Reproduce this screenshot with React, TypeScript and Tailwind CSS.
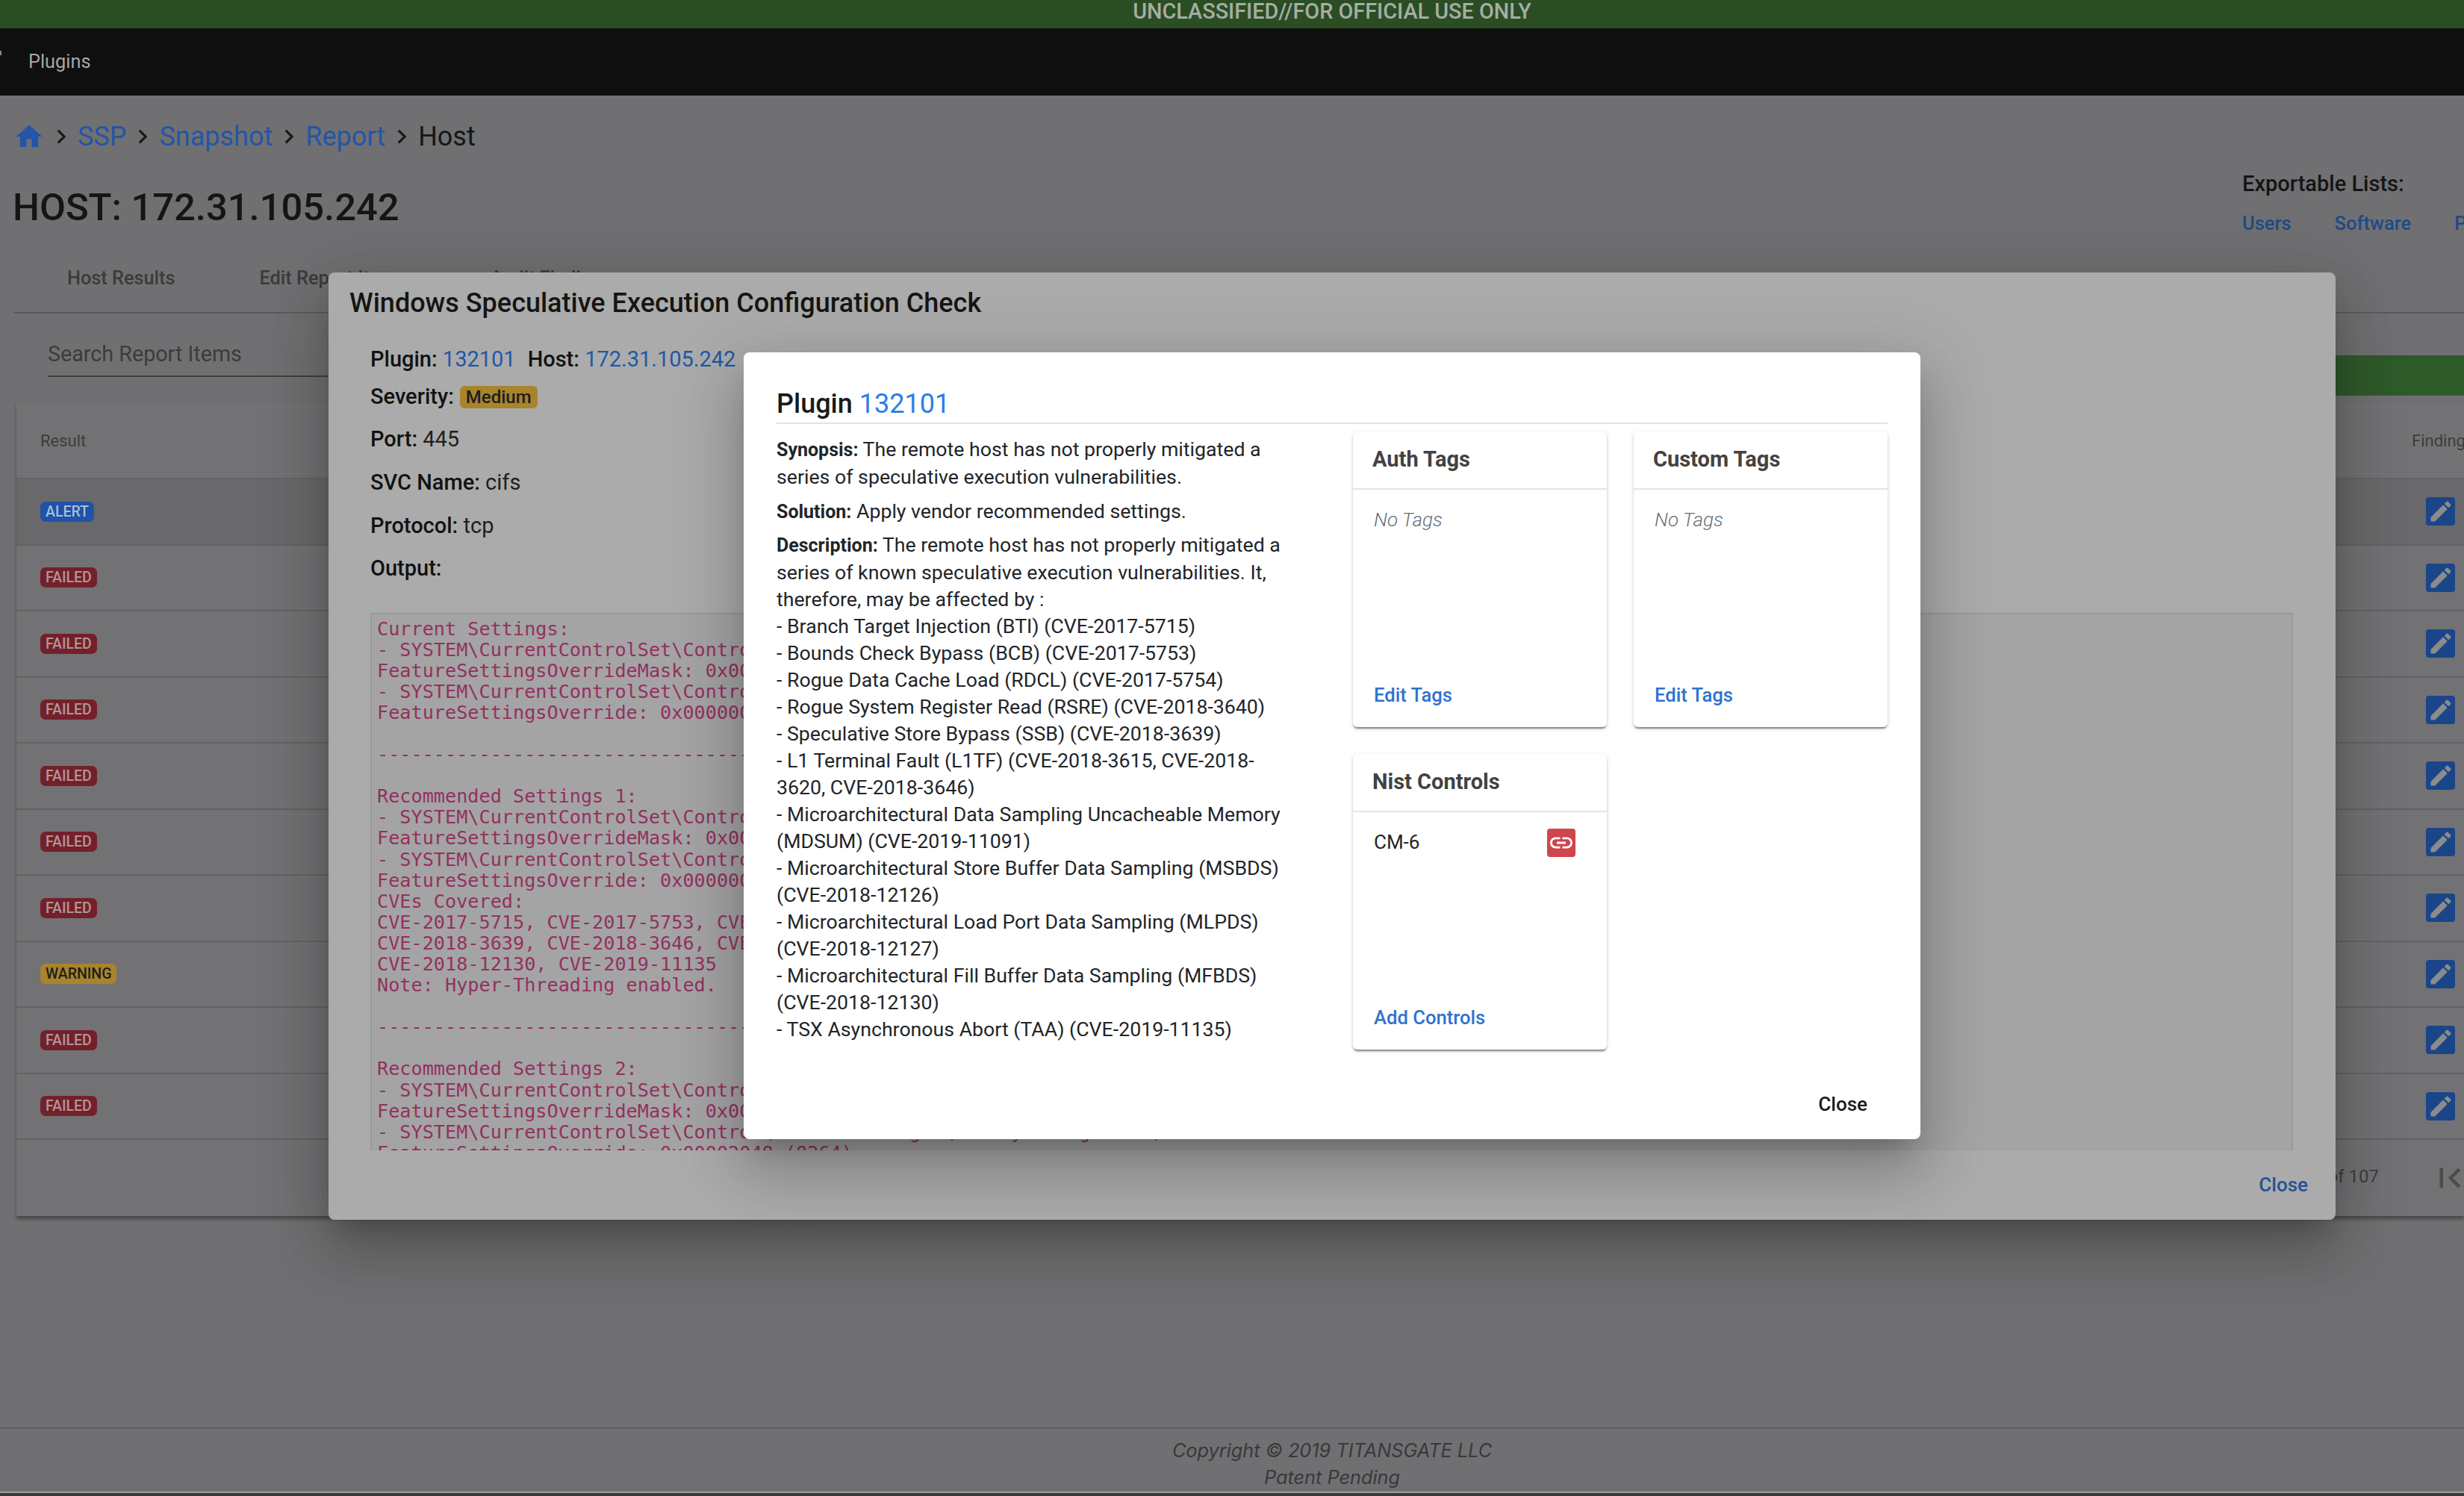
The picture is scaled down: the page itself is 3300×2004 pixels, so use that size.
const preLines = [
  "Current Settings:",
  "- SYSTEM\\CurrentControlSet\\Control\\Session Manager\\Memory Management\\",
  "FeatureSettingsOverrideMask: 0x00000003 (3)",
  "- SYSTEM\\CurrentControlSet\\Control\\Session Manager\\Memory Management\\",
  "FeatureSettingsOverride: 0x00000000 (0)",
  "",
  "------------------------------------------------------------",
  "",
  "Recommended Settings 1:",
  "- SYSTEM\\CurrentControlSet\\Control\\Session Manager\\Memory Management\\",
  "FeatureSettingsOverrideMask: 0x00000003 (3)",
  "- SYSTEM\\CurrentControlSet\\Control\\Session Manager\\Memory Management\\",
  "FeatureSettingsOverride: 0x00000000 (0)",
  "CVEs Covered:",
  "CVE-2017-5715, CVE-2017-5753, CVE-2017-5754, CVE-2018-3640,",
  "CVE-2018-3639, CVE-2018-3646, CVE-2018-12126, CVE-2018-12127,",
  "CVE-2018-12130, CVE-2019-11135",
  "Note: Hyper-Threading enabled.",
  "",
  "------------------------------------------------------------",
  "",
  "Recommended Settings 2:",
  "- SYSTEM\\CurrentControlSet\\Control\\Session Manager\\Memory Management\\",
  "FeatureSettingsOverrideMask: 0x00000003 (3)",
  "- SYSTEM\\CurrentControlSet\\Control\\Session Manager\\Memory Management\\",
  "FeatureSettingsOverride: 0x00002048 (8264)",
];

const descriptionLines = [
  "series of known speculative execution vulnerabilities. It,",
  "therefore, may be affected by :",
  "- Branch Target Injection (BTI) (CVE-2017-5715)",
  "- Bounds Check Bypass (BCB) (CVE-2017-5753)",
  "- Rogue Data Cache Load (RDCL) (CVE-2017-5754)",
  "- Rogue System Register Read (RSRE) (CVE-2018-3640)",
  "- Speculative Store Bypass (SSB) (CVE-2018-3639)",
  "- L1 Terminal Fault (L1TF) (CVE-2018-3615, CVE-2018-",
  "3620, CVE-2018-3646)",
  "- Microarchitectural Data Sampling Uncacheable Memory",
  "(MDSUM) (CVE-2019-11091)",
  "- Microarchitectural Store Buffer Data Sampling (MSBDS)",
  "(CVE-2018-12126)",
  "- Microarchitectural Load Port Data Sampling (MLPDS)",
  "(CVE-2018-12127)",
  "- Microarchitectural Fill Buffer Data Sampling (MFBDS)",
  "(CVE-2018-12130)",
  "- TSX Asynchronous Abort (TAA) (CVE-2019-11135)",
];

const rows = [
  "ALERT",
  "FAILED",
  "FAILED",
  "FAILED",
  "FAILED",
  "FAILED",
  "FAILED",
  "WARNING",
  "FAILED",
  "FAILED",
];

function MdIcon({ d, className }: { d: string; className: string }) {
  return (
    <svg viewBox="0 0 24 24" fill="currentColor" className={className}>
      <path d={d} />
    </svg>
  );
}

function Chevron() {
  return (
    <MdIcon
      d="M10 6L8.59 7.41 13.17 12l-4.58 4.59L10 18l6-6z"
      className="mx-[3px] h-[38px] w-[38px] shrink-0 text-[#1a1a1a]"
    />
  );
}

function StatusBadge({ label }: { label: string }) {
  const color =
    label === "ALERT"
      ? "bg-[#2052a6] text-[#a9bcdc]"
      : label === "WARNING"
        ? "bg-[#a8842c] text-[#1d1d1d]"
        : "bg-[#74202a] text-[#b09698]";
  return (
    <span
      className={`inline-flex h-[27px] items-center rounded-[7px] px-[7px] text-[19.5px] font-medium ${color}`}
    >
      {label}
    </span>
  );
}

function Card({
  title,
  action,
  children,
}: {
  title: string;
  action: string;
  children: React.ReactNode;
}) {
  return (
    <div className="flex h-[396px] flex-col rounded-[6px] bg-white shadow-[0_4px_2px_-2px_rgba(0,0,0,0.3),0_2px_2px_0_rgba(0,0,0,0.18),0_2px_6px_0_rgba(0,0,0,0.14)]">
      <div className="flex h-[78px] shrink-0 items-center border-b-2 border-[#e3e3e3] pl-[26px] text-[29px] font-bold text-[#424242]">
        {title}
      </div>
      <div className="flex-1 pl-[28px] pr-[42px] pt-[22px] text-[26px] leading-[36px]">
        {children}
      </div>
      <div className="pb-[25px] pl-[28px] text-[25.6px] font-medium leading-[36px] text-[#2f72d0]">
        {action}
      </div>
    </div>
  );
}

function PluginModal() {
  return (
    <div className="absolute inset-0 flex items-center justify-center pb-[6px] pl-[268px]">
      <div className="flex h-[1054px] w-[1576px] flex-col rounded-[8px] bg-white pl-[44px] pr-[44px] shadow-[0_22px_30px_-14px_rgba(0,0,0,0.2),0_48px_76px_6px_rgba(0,0,0,0.14),0_18px_92px_16px_rgba(0,0,0,0.12)]">
        <div className="flex h-[96px] shrink-0 items-end border-b-2 border-[#e2e2e2] pb-[3px] text-[36px] font-medium leading-[44px] text-[#1a1a1a]">
          Plugin&nbsp;<span className="font-normal text-[#2b7de9]">132101</span>
        </div>
        <div className="flex justify-between">
          <div className="w-[720px] whitespace-nowrap pt-[16px] text-[26.7px] leading-[36px] text-[#212529]">
            <p className="mb-[10px]">
              <strong className="text-[25px] font-bold">Synopsis:</strong> The remote host has not
              properly mitigated a
              <br />
              series of speculative execution vulnerabilities.
            </p>
            <p className="mb-[8px]">
              <strong className="text-[25px] font-bold">Solution:</strong> Apply vendor recommended
              settings.
            </p>
            <p>
              <strong className="text-[25px] font-bold">Description:</strong> The remote host has
              not properly mitigated a
            </p>
            {descriptionLines.map((line, i) => (
              <div key={i}>{line}</div>
            ))}
          </div>
          <div className="grid grid-cols-[340px_340px] gap-[36px] pt-[10px]">
            <Card title="Auth Tags" action="Edit Tags">
              <i className="font-light text-[#666f76]">No Tags</i>
            </Card>
            <Card title="Custom Tags" action="Edit Tags">
              <i className="font-light text-[#666f76]">No Tags</i>
            </Card>
            <Card title="Nist Controls" action="Add Controls">
              <div className="flex items-start justify-between text-[#212529]">
                <span>CM-6</span>
                <button className="flex h-[38px] w-[38px] items-center justify-center rounded-[4px] bg-[#cf454c] text-white">
                  <MdIcon
                    d="M3.9 12c0-1.71 1.39-3.1 3.1-3.1h4V7H7c-2.76 0-5 2.24-5 5s2.24 5 5 5h4v-1.9H7c-1.71 0-3.1-1.39-3.1-3.1zM8 13h8v-2H8v2zm9-6h-4v1.9h4c1.71 0 3.1 1.39 3.1 3.1s-1.39 3.1-3.1 3.1h-4V17h4c2.76 0 5-2.24 5-5s-2.24-5-5-5z"
                    className="h-[36px] w-[36px]"
                  />
                </button>
              </div>
            </Card>
          </div>
        </div>
        <div className="mt-auto flex justify-end pb-[29px] pr-[27px] text-[26px] font-medium leading-[36px] text-[#1a1a1a]">
          Close
        </div>
      </div>
    </div>
  );
}

function FindingModal() {
  return (
    <div className="absolute inset-0 flex items-center justify-center pb-[6px] pl-[268px]">
      <div className="flex h-[1269px] w-[2688px] flex-col rounded-[8px] bg-[#ababab] shadow-[0_22px_30px_-14px_rgba(0,0,0,0.2),0_48px_76px_6px_rgba(0,0,0,0.14),0_18px_92px_16px_rgba(0,0,0,0.12)]">
        <div className="h-[82px] shrink-0 pl-[28px] pt-[19px] text-[36px] font-medium leading-[44px] text-[#151515]">
          Windows Speculative Execution Configuration Check
        </div>
        <div className="pl-[56px] text-[29px] leading-[40px] text-[#1f1f1f]">
          <div className="mt-[14px] h-[50px]">
            <b className="font-medium text-[#121212]">Plugin:</b>{" "}
            <span className="text-[#1f58a8]">132101</span>
            <b className="ml-[16px] font-medium text-[#121212]">Host:</b>{" "}
            <span className="text-[#1f58a8]">172.31.105.242</span>
          </div>
          <div className="flex h-[57px] items-start">
            <b className="font-medium text-[#121212]">Severity:</b>
            <span className="ml-[8px] mt-[6px] flex h-[30px] items-center rounded-[6px] bg-[#a8842c] px-[8px] text-[24px] font-medium text-[#1d1d1d]">
              Medium
            </span>
          </div>
          <div className="h-[58px]">
            <b className="font-medium text-[#121212]">Port:</b> 445
          </div>
          <div className="h-[58px]">
            <b className="font-medium text-[#121212]">SVC Name:</b> cifs
          </div>
          <div className="h-[57px]">
            <b className="font-medium text-[#121212]">Protocol:</b> tcp
          </div>
          <div className="h-[80px]">
            <b className="font-medium text-[#121212]">Output:</b>
          </div>
        </div>
        <div className="ml-[56px] h-[720px] w-[2575px] shrink-0 overflow-hidden border-x-2 border-t-2 border-[#999999] bg-[#a4a4a4] pl-[7px] pt-[6px]">
          <pre className="font-['DejaVu_Sans_Mono',monospace] text-[25.2px] leading-[28.1px] text-[#943060]">
            {preLines.join("\n")}
          </pre>
        </div>
        <div className="flex flex-1 items-center justify-end pr-[37px] text-[26px] font-medium text-[#245296]">
          Close
        </div>
      </div>
    </div>
  );
}

export default function App() {
  return (
    <div className="relative h-[2004px] w-[3300px] overflow-hidden bg-[#707072] font-['Roboto',sans-serif]">
      <div className="flex h-[38px] justify-center bg-[#2a4d24] pl-[268px] text-[28.8px] font-medium leading-[30px] text-[#a5aea2]">
        UNCLASSIFIED//FOR OFFICIAL USE ONLY
      </div>
      <div className="flex h-[90px] items-center bg-[#0f0f0f] text-[25.3px] text-[#a6a6a6]">
        <span className="mb-[24px] h-[6px] w-[2px] bg-[#8a8a8a]" />
        <span className="ml-[36px]">Plugins</span>
      </div>

      <div className="flex h-[186px] items-start">
        <div className="pl-[18px]">
          <div className="mt-[34px] flex h-[42px] items-center text-[36px] text-[#2455a7]">
            <MdIcon
              d="M10 20v-6h4v6h5v-8h3L12 3 2 12h3v8z"
              className="h-[42px] w-[42px] shrink-0 text-[#2455a7]"
            />
            <Chevron />
            <span>SSP</span>
            <Chevron />
            <span>Snapshot</span>
            <Chevron />
            <span>Report</span>
            <Chevron />
            <span className="text-[#161616]">Host</span>
          </div>
          <h1 className="mt-[46px] -ml-px text-[50.7px] font-medium leading-[56px] text-[#151515]">
            HOST: 172.31.105.242
          </h1>
        </div>
        <div className="ml-auto w-[297px] shrink-0 whitespace-nowrap pt-[100px]">
          <div className="text-[29px] font-medium leading-[36px] text-[#151515]">
            Exportable Lists:
          </div>
          <div className="mt-[18px] flex gap-[58px] text-[25.5px] font-medium leading-[34px] text-[#1f4a86]">
            <span>Users</span>
            <span>Software</span>
            <span>Plugins</span>
          </div>
        </div>
      </div>

      <div className="ml-[18px] flex h-[106px] items-center gap-[113px] border-b-2 border-[#5c5c5e] pl-[72px] pt-[14px] text-[25.3px] font-medium text-[#3b3b3b]">
        <span>Host Results</span>
        <span>Edit Report Items</span>
        <span>Audit Findings</span>
      </div>

      <div className="flex h-[120px] items-start pl-[64px]">
        <div className="h-[85px] w-[800px] border-b-2 border-[#3f3f3f] pt-[36px] text-[28.7px] leading-[36px] text-[#3c3c3c]">
          Search Report Items
        </div>
        <div className="ml-auto mt-[56px] h-[54px] w-[800px] bg-[#2f5a2a]" />
      </div>

      <div className="ml-[22px] w-[3278px] bg-[#727274] shadow-[0_4px_4px_rgba(0,0,0,0.35)]">
        <div className="flex h-[102px] items-center border-b-2 border-[#646466] pl-[32px] pr-[12px] text-[22px] text-[#3d3d3d]">
          <span>Result</span>
          <span className="ml-auto w-[58px] whitespace-nowrap">Findings</span>
        </div>
        {rows.map((label, i) => (
          <div
            key={i}
            className={`flex h-[88.5px] items-center border-b-2 border-[#626264] pl-[32px] pr-[12px] ${
              i === 0 ? "bg-[#69696b]" : ""
            }`}
          >
            <StatusBadge label={label} />
            <button className="ml-auto flex h-[38px] w-[39px] items-center justify-center rounded-[4px] bg-[#1a4589] text-[#8b8b8b]">
              <MdIcon
                d="M3 17.25V21h3.75L17.81 9.94l-3.75-3.75L3 17.25zM20.71 7.04c.39-.39.39-1.02 0-1.41l-2.34-2.34c-.39-.39-1.02-.39-1.41 0l-1.83 1.83 3.75 3.75 1.83-1.83z"
                className="h-[36px] w-[36px]"
              />
            </button>
          </div>
        ))}
        <div className="flex h-[102px] items-center justify-end text-[24px] text-[#3d3d3d]">
          <span className="mb-[4px] mr-[68px]">1-10 of 107</span>
          <MdIcon
            d="M18.41 16.59L13.82 12l4.59-4.59L17 6l-6 6 6 6zM6 6h2v12H6z"
            className="-mr-[8px] h-[54px] w-[54px] shrink-0 text-[#4c4c4c]"
          />
        </div>
      </div>

      <div className="mt-[283px] flex h-[88px] flex-col items-center justify-center border-b-2 border-t-2 border-b-[#a0a0a0] border-t-[#5f5f61] pl-[268px] pt-[10px] font-['Inter',sans-serif] text-[25.3px] italic leading-[36px] text-[#38393b]">
        <div>Copyright © 2019 TITANSGATE LLC</div>
        <div>Patent Pending</div>
      </div>
      <div className="h-[4px] bg-[#3a3a3a]" />

      <FindingModal />
      <PluginModal />
    </div>
  );
}
